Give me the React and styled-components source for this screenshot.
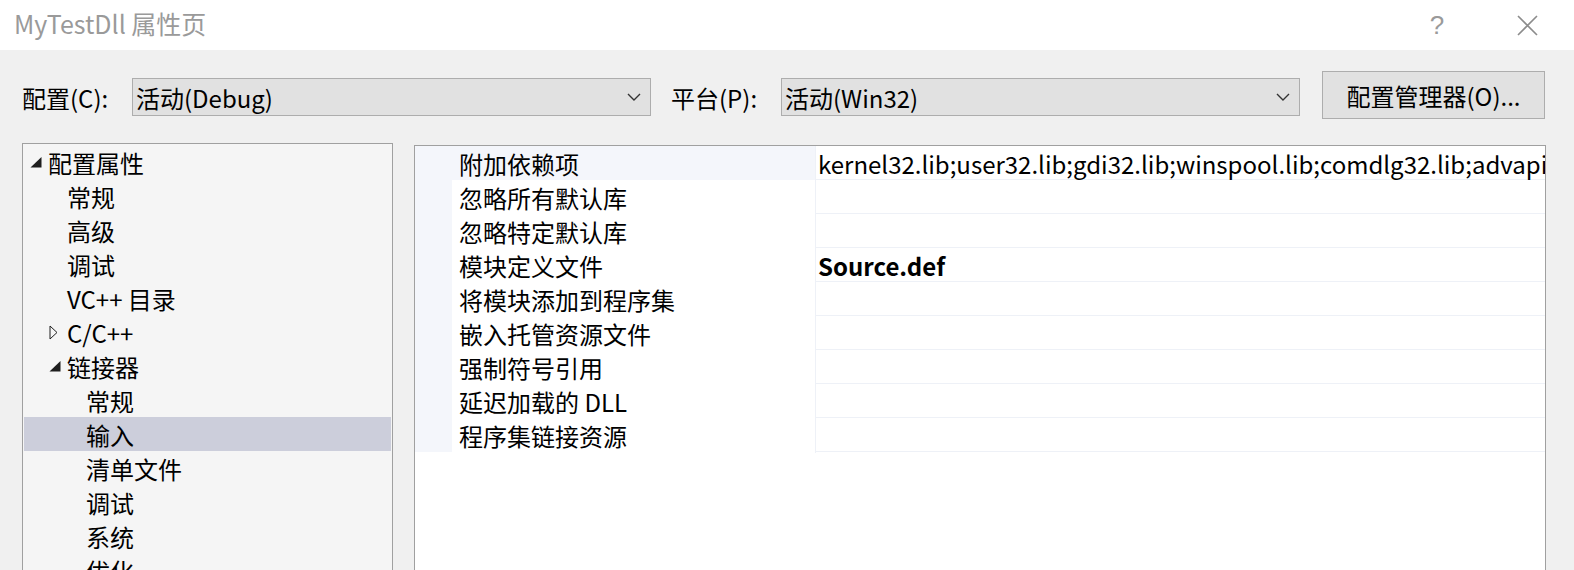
import React from 'react';
import styled, { createGlobalStyle } from 'styled-components';

const GlobalStyle = createGlobalStyle`
  html, body {
    margin: 0;
    padding: 0;
    background: #f0f0f0;
    overflow: hidden;
  }
  body {
    font-family: "Noto Sans CJK SC", "Noto Sans", sans-serif;
    font-size: 24px;
    color: #000;
  }
`;

const Window = styled.div`
  width: 1574px;
  height: 570px;
  display: flex;
  flex-direction: column;
  background: #f0f0f0;
  overflow: hidden;
`;

const TitleBar = styled.div`
  height: 50px;
  flex: none;
  background: #fff;
  display: flex;
  align-items: center;
  padding: 0 12px 0 14px;
  color: #9a9a9a;
  font-size: 25px;
`;

const TitleText = styled.div`
  flex: 1;
  line-height: 1;
  margin-top: -3px;
`;

const TitleButton = styled.div`
  width: ${p => p.$w}px;
  height: 50px;
  display: flex;
  align-items: center;
  justify-content: center;
  color: #9a9a9a;
  font-size: 26px;
  font-family: "Liberation Sans", sans-serif;
`;

const Toolbar = styled.div`
  display: flex;
  align-items: flex-start;
  padding: 21px 0 0 22px;
  height: 93px;
  flex: none;
  box-sizing: border-box;
`;

const Label = styled.div`
  height: 38px;
  margin-top: 7px;
  display: flex;
  align-items: center;
  width: ${p => p.$w}px;
  padding-left: ${p => p.$pad || 0}px;
  box-sizing: border-box;
  flex: none;
  white-space: nowrap;
`;

const Combo = styled.div`
  margin-top: 7px;
  width: ${p => p.$w}px;
  height: 38px;
  box-sizing: border-box;
  border: 1px solid #adadad;
  background: #e1e1e1;
  display: flex;
  align-items: center;
  padding: 0 9px 0 3px;
  flex: none;
`;

const ComboText = styled.span`
  flex: 1;
  white-space: nowrap;
`;

const Button = styled.div`
  margin-left: 22px;
  width: 223px;
  height: 48px;
  box-sizing: border-box;
  border: 1px solid #adadad;
  background: #e1e1e1;
  display: flex;
  align-items: center;
  justify-content: center;
  flex: none;
  white-space: nowrap;
`;

const Main = styled.div`
  display: flex;
  align-items: flex-start;
  padding-left: 22px;
  flex: 1;
  min-height: 0;
`;

const Tree = styled.div`
  width: 371px;
  height: 460px;
  flex: none;
  box-sizing: border-box;
  border: 1px solid #a0a0a0;
  background: #f5f5f5;
  padding: 1px 1px 0 1px;
  overflow: hidden;
`;

const TreeRow = styled.div`
  height: 34px;
  display: flex;
  align-items: center;
  padding-left: ${p => 6 + p.$level * 19}px;
  background: ${p => (p.$selected ? '#cccedb' : 'transparent')};
  white-space: nowrap;
`;

const Expander = styled.span`
  width: 18px;
  flex: none;
  display: flex;
  align-items: center;
`;

const Grid = styled.div`
  margin-left: 21px;
  margin-top: 2px;
  width: 1132px;
  height: 460px;
  flex: none;
  box-sizing: border-box;
  border: 1px solid #a0a0a0;
  background: #fff;
  display: flex;
  overflow: hidden;
`;

const Gutter = styled.div`
  width: 37px;
  flex: none;
  align-self: flex-start;
  height: ${p => p.$h}px;
  background: #f4f6fb;
`;

const Rows = styled.div`
  flex: 1;
  min-width: 0;
`;

const PropRow = styled.div`
  display: grid;
  grid-template-columns: 364px 1fr;
  height: 34px;
  box-sizing: border-box;
  border-bottom: 1px solid #eef1f7;
`;

const NameCell = styled.div`
  display: flex;
  align-items: center;
  padding-left: 7px;
  background: ${p => (p.$active ? '#f4f6fb' : '#fff')};
  border-right: 1px solid #eef1f7;
  white-space: nowrap;
`;

const ValueCell = styled.div`
  display: flex;
  align-items: center;
  padding-left: 2px;
  white-space: nowrap;
  overflow: hidden;
  font-weight: ${p => (p.$bold ? 700 : 400)};
`;

const Chevron = () => (
  <svg width="14" height="8" viewBox="0 0 14 8">
    <path d="M1 1 L7 7 L13 1" fill="none" stroke="#333" strokeWidth="1.4" />
  </svg>
);

const FilledArrow = () => (
  <svg width="12" height="11" viewBox="0 0 12 11">
    <polygon points="11.5,0 11.5,10.5 0.5,10.5" fill="#1e1e1e" />
  </svg>
);

const HollowArrow = () => (
  <svg width="9" height="15" viewBox="0 0 9 15">
    <polygon points="1,1 8,7.5 1,14" fill="none" stroke="#1e1e1e" strokeWidth="1" />
  </svg>
);

const CloseIcon = () => (
  <svg width="21" height="21" viewBox="0 0 21 21">
    <path d="M1 1 L20 20 M20 1 L1 20" stroke="#8c8c8c" strokeWidth="1.6" />
  </svg>
);

const treeItems = [
  { label: '配置属性', level: 0, arrow: 'open' },
  { label: '常规', level: 1 },
  { label: '高级', level: 1 },
  { label: '调试', level: 1 },
  { label: 'VC++ 目录', level: 1 },
  { label: 'C/C++', level: 1, arrow: 'closed' },
  { label: '链接器', level: 1, arrow: 'open' },
  { label: '常规', level: 2 },
  { label: '输入', level: 2, selected: true },
  { label: '清单文件', level: 2 },
  { label: '调试', level: 2 },
  { label: '系统', level: 2 },
  { label: '优化', level: 2 },
];

const props = [
  { name: '附加依赖项', value: 'kernel32.lib;user32.lib;gdi32.lib;winspool.lib;comdlg32.lib;advapi', active: true },
  { name: '忽略所有默认库', value: '' },
  { name: '忽略特定默认库', value: '' },
  { name: '模块定义文件', value: 'Source.def', bold: true },
  { name: '将模块添加到程序集', value: '' },
  { name: '嵌入托管资源文件', value: '' },
  { name: '强制符号引用', value: '' },
  { name: '延迟加载的 DLL', value: '' },
  { name: '程序集链接资源', value: '' },
];

const App = () => {
  return (
    <Window>
      <GlobalStyle />
      <TitleBar>
        <TitleText>MyTestDll 属性页</TitleText>
        <TitleButton $w={110}>?</TitleButton>
        <TitleButton $w={70}><CloseIcon /></TitleButton>
      </TitleBar>

      <Toolbar>
        <Label $w={110}>配置(C):</Label>
        <Combo $w={519}>
          <ComboText>活动(Debug)</ComboText>
          <Chevron />
        </Combo>
        <Label $w={130} $pad={20}>平台(P):</Label>
        <Combo $w={519}>
          <ComboText>活动(Win32)</ComboText>
          <Chevron />
        </Combo>
        <Button>配置管理器(O)...</Button>
      </Toolbar>

      <Main>
        <Tree>
          {treeItems.map((item, i) => (
            <TreeRow key={i} $level={item.level} $selected={item.selected}>
              <Expander>
                {item.arrow === 'open' && <FilledArrow />}
                {item.arrow === 'closed' && <HollowArrow />}
              </Expander>
              {item.label}
            </TreeRow>
          ))}
        </Tree>
        <Grid>
          <Gutter $h={props.length * 34} />
          <Rows>
            {props.map((p, i) => (
              <PropRow key={i}>
                <NameCell $active={p.active}>{p.name}</NameCell>
                <ValueCell $bold={p.bold}>{p.value}</ValueCell>
              </PropRow>
            ))}
          </Rows>
        </Grid>
      </Main>
    </Window>
  );
};

export default App;
